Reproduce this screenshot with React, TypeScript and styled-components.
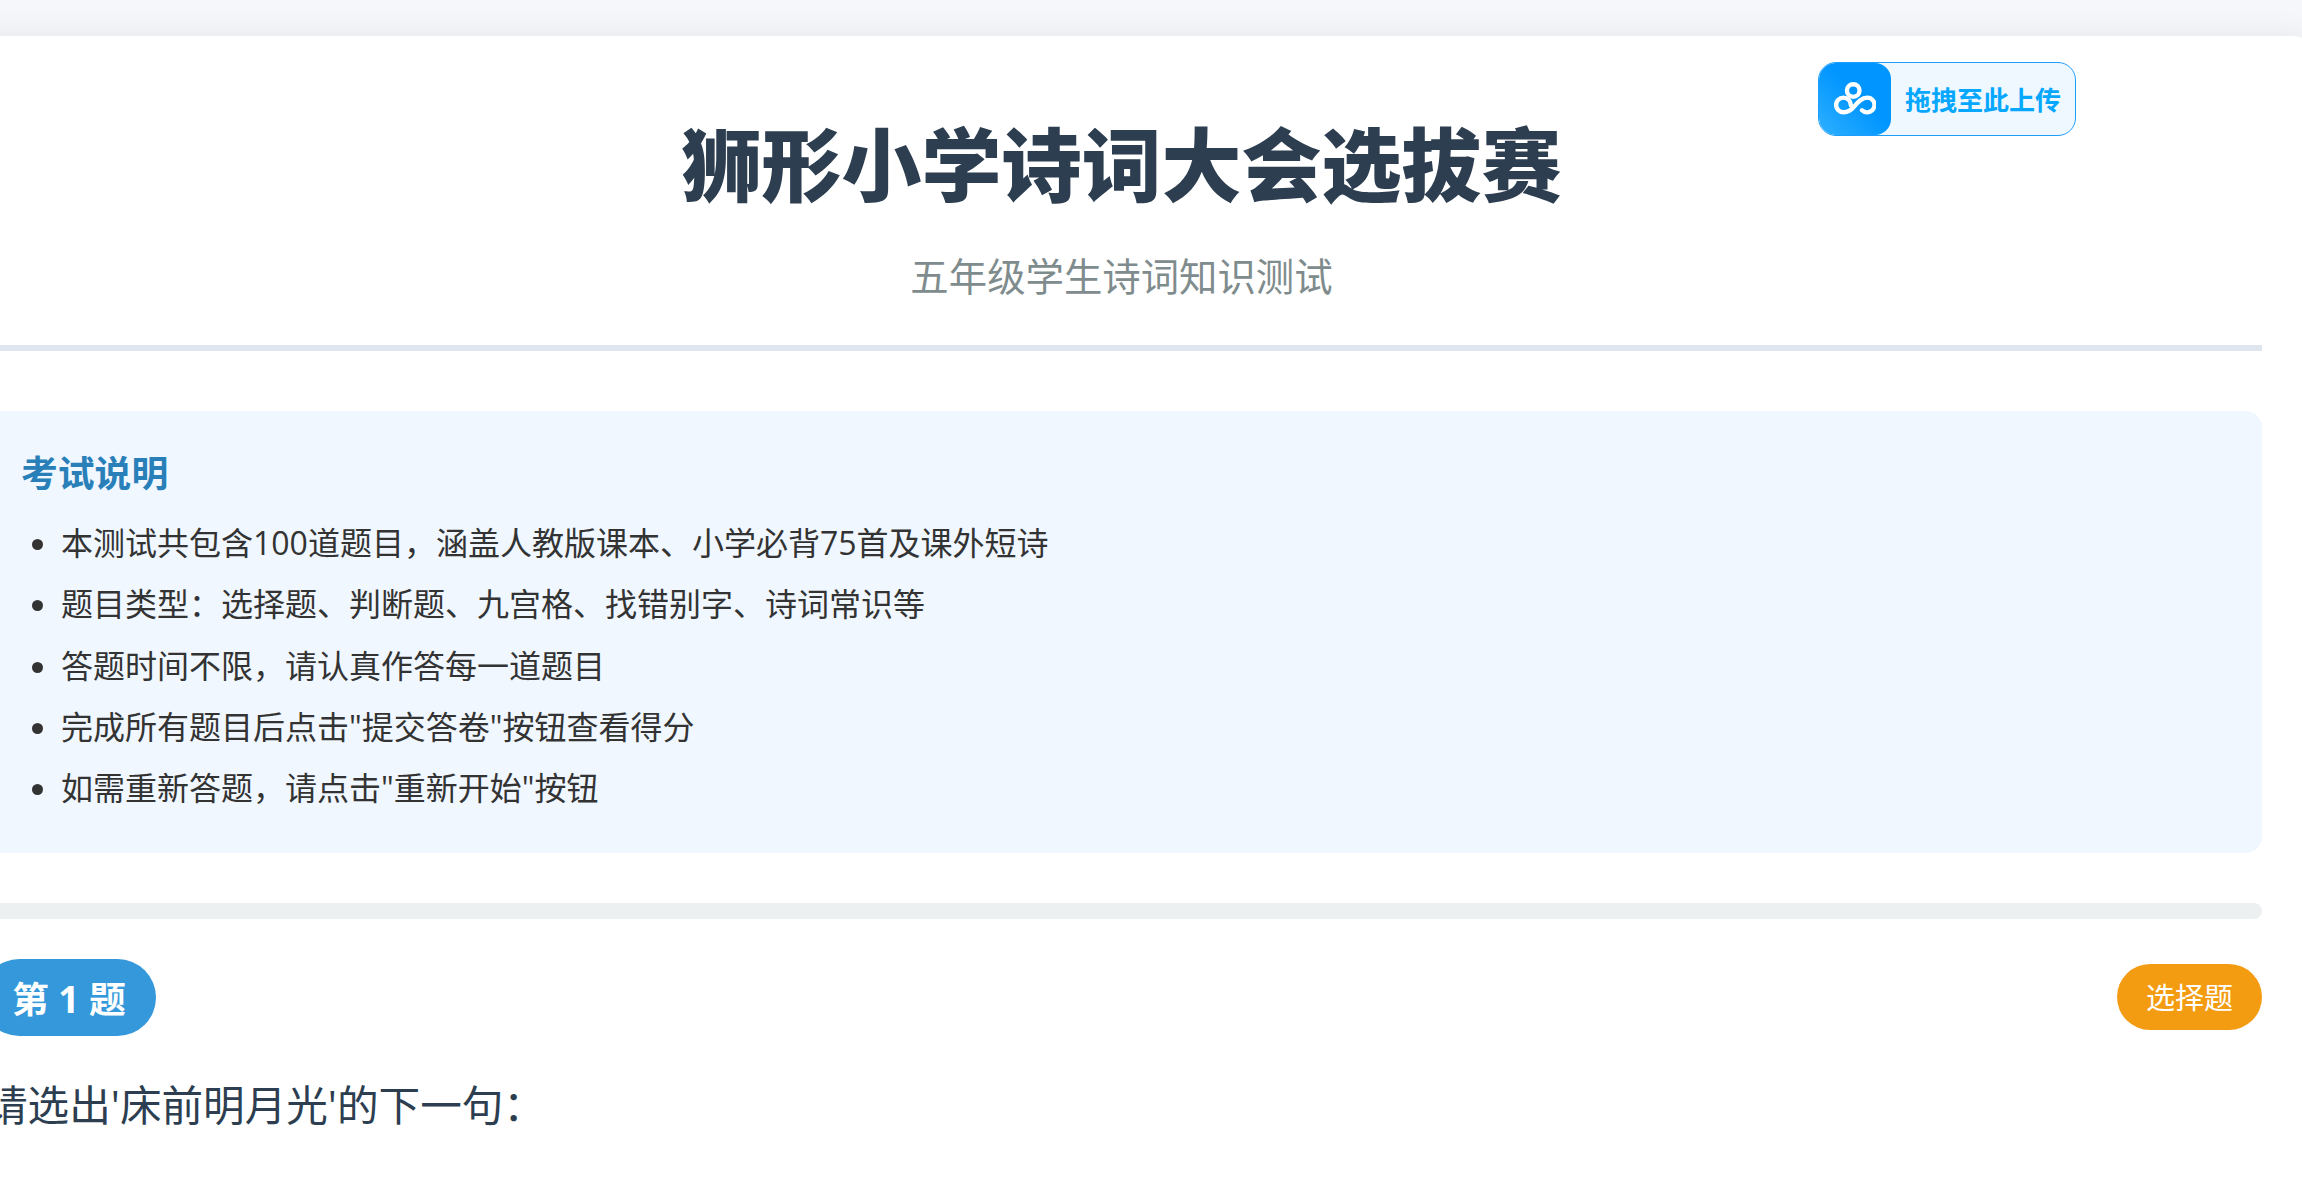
import React from 'react'
import styled, { createGlobalStyle } from 'styled-components'

const GlobalStyle = createGlobalStyle`
  html, body {
    margin: 0;
    padding: 0;
    height: 100%;
    overflow: hidden;
    background: #f5f7fa;
    font-family: "Open Sans", "Noto Sans CJK SC", sans-serif;
  }
  * {
    box-sizing: border-box;
  }
`

const Page = styled.div`
  width: 2302px;
  height: 1180px;
  padding-top: 36px;
  overflow: hidden;
`

/* the page is wider than the window and sits scrolled to the right */
const Card = styled.main`
  width: 2377px;
  min-height: 1300px;
  margin-left: -67px;
  padding: 60px 48px 40px;
  background: #fff;
  border-radius: 16px;
  box-shadow: 0 0 30px rgba(0, 0, 0, 0.08);
`

const Header = styled.header`
  padding-bottom: 43px;
  border-bottom: 6px solid #e0e6f0;
  text-align: center;
`

const Title = styled.h1`
  margin: 0 0 26px;
  font-family: "Noto Sans CJK SC", sans-serif;
  font-size: 80px;
  line-height: 128px;
  font-weight: 900;
  color: #2c3e50;
`

const Subtitle = styled.p`
  margin: 0;
  font-size: 38.4px;
  line-height: 52px;
  color: #7f8c8d;
`

const Instructions = styled.section`
  margin-top: 60px;
  padding: 33px 40px 32px;
  height: 442px;
  background: #f0f7ff;
  border-radius: 16px;
`

const InstructionsTitle = styled.h3`
  margin: 0 0 10px;
  font-size: 36.8px;
  line-height: 58px;
  font-weight: 700;
  color: #2980b9;
`

const RuleList = styled.ul`
  margin: 0;
  padding: 0 0 0 40px;
`

const Rule = styled.li`
  font-size: 32px;
  line-height: 61.3px;
  color: #333;
`

const Progress = styled.div`
  height: 16px;
  margin-top: 50px;
  background: #ecf0f1;
  border-radius: 8px;
`

const QuestionHead = styled.div`
  display: flex;
  align-items: center;
  justify-content: space-between;
  margin-top: 40px;
`

const Number = styled.span`
  height: 77px;
  padding: 0 30px 2px 31px;
  display: flex;
  align-items: center;
  font-size: 36.8px;
  font-weight: 700;
  color: #fff;
  background: #3498db;
  border-radius: 38.5px;
`

const Kind = styled.span`
  height: 66px;
  margin-bottom: 1px;
  padding: 0 29px 2px;
  display: flex;
  align-items: center;
  font-size: 29px;
  color: #fff;
  background: #f39c12;
  border-radius: 33px;
`

const Question = styled.p`
  margin: 37px 0 0 5px;
  font-size: 41.6px;
  line-height: 64px;
  color: #2c3e50;
`

const Upload = styled.div`
  position: fixed;
  top: 62px;
  right: 226px;
  width: 258px;
  height: 74px;
  display: flex;
  align-items: center;
  background: #f0f8ff;
  border: 1.5px solid #1e9dfb;
  border-radius: 18px;
  overflow: hidden;
`

const UploadIcon = styled.div`
  width: 72px;
  height: 100%;
  flex: none;
  display: flex;
  align-items: center;
  justify-content: center;
  background: linear-gradient(45deg, #2fb0ff 0%, #0095ff 55%, #0095ff 100%);
  border-radius: 16px;
`

const UploadText = styled.span`
  margin-left: 14px;
  font-size: 26px;
  font-weight: 700;
  white-space: nowrap;
  color: #06a7ff;
`

const CloudIcon = () => (
  <svg width="42" height="34" viewBox="0 0 120 96" fill="none" stroke="#fff" strokeWidth="12.5" strokeLinecap="round">
    <circle cx="55" cy="24" r="18" />
    <path d="M80 80A21 21 0 1 0 95 44C79 44 68 57 58 69C50 79 42 86 27 86A21 21 0 1 1 48 65" />
  </svg>
)

const rules = [
  '本测试共包含100道题目，涵盖人教版课本、小学必背75首及课外短诗',
  '题目类型：选择题、判断题、九宫格、找错别字、诗词常识等',
  '答题时间不限，请认真作答每一道题目',
  '完成所有题目后点击"提交答卷"按钮查看得分',
  '如需重新答题，请点击"重新开始"按钮',
]

const App = () => (
  <Page>
    <GlobalStyle />
    <Card>
      <Header>
        <Title>狮形小学诗词大会选拔赛</Title>
        <Subtitle>五年级学生诗词知识测试</Subtitle>
      </Header>
      <Instructions>
        <InstructionsTitle>考试说明</InstructionsTitle>
        <RuleList>
          {rules.map((rule) => (
            <Rule key={rule}>{rule}</Rule>
          ))}
        </RuleList>
      </Instructions>
      <Progress />
      <QuestionHead>
        <Number>第 1 题</Number>
        <Kind>选择题</Kind>
      </QuestionHead>
      <Question>请选出'床前明月光'的下一句：</Question>
    </Card>
    <Upload>
      <UploadIcon>
        <CloudIcon />
      </UploadIcon>
      <UploadText>拖拽至此上传</UploadText>
    </Upload>
  </Page>
)

export default App
